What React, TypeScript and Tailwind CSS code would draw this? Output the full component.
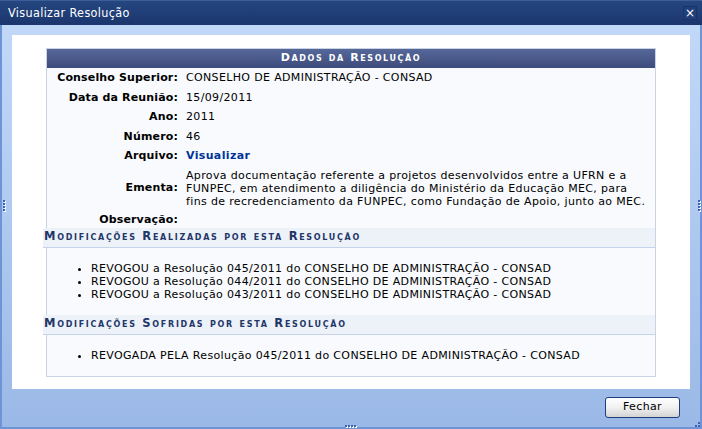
import React from "react";

const campos: { label: string; value: React.ReactNode }[] = [
  { label: "Conselho Superior:", value: "CONSELHO DE ADMINISTRAÇÃO - CONSAD" },
  { label: "Data da Reunião:", value: "15/09/2011" },
  { label: "Ano:", value: "2011" },
  { label: "Número:", value: "46" },
  {
    label: "Arquivo:",
    value: <a className="font-bold text-[#003399]">Visualizar</a>,
  },
  {
    label: "Ementa:",
    value:
      "Aprova documentação referente a projetos desenvolvidos entre a UFRN e a FUNPEC, em atendimento a diligência do Ministério da Educação MEC, para fins de recredenciamento da FUNPEC, como Fundação de Apoio, junto ao MEC.",
  },
  { label: "Observação:", value: "" },
];

const realizadas = [
  "REVOGOU a Resolução 045/2011 do CONSELHO DE ADMINISTRAÇÃO - CONSAD",
  "REVOGOU a Resolução 044/2011 do CONSELHO DE ADMINISTRAÇÃO - CONSAD",
  "REVOGOU a Resolução 043/2011 do CONSELHO DE ADMINISTRAÇÃO - CONSAD",
];

const sofridas = [
  "REVOGADA PELA Resolução 045/2011 do CONSELHO DE ADMINISTRAÇÃO - CONSAD",
];

const Grip = ({ vertical }: { vertical?: boolean }) => (
  <div className={vertical ? "flex flex-col gap-[1px]" : "flex gap-[1px]"}>
    {[0, 1, 2, 3].map((i) => (
      <span key={i} className="block w-[2px] h-[2px] bg-[#3b64b8] shadow-[1px_1px_0_#ffffff]" />
    ))}
  </div>
);

const SecaoHeader = ({ title }: { title: string }) => (
  <div className="bg-[#edf1f8] border-b border-[#c4d3ea] h-[20px] flex items-center pl-[1px] -ml-[4px] text-[11.5px] font-bold tracking-[1.7px] text-[#1f3668] [font-variant:small-caps]">
    {title}
  </div>
);

const Lista = ({ items }: { items: string[] }) => (
  <ul className="list-disc pl-[44px] py-[14px] leading-[13px] bg-[#f8fafd]">
    {items.map((t) => (
      <li key={t}>{t}</li>
    ))}
  </ul>
);

export default function App() {
  return (
    <div className="w-[702px] h-[429px] flex flex-col font-['DejaVu_Sans',Verdana,sans-serif] text-[11px] tracking-[0.35px] text-black relative overflow-hidden">
      {/* barra de titulo */}
      <div className="h-[25px] shrink-0 flex items-center justify-between pl-[8px] pr-[5px] bg-gradient-to-b from-[#25467f] to-[#1b366f] border-t border-[#3c5d98]">
        <span className="text-white text-[12.5px] font-['DejaVu_Sans_Condensed','DejaVu_Sans',sans-serif] tracking-[0.35px]">
          Visualizar Resolução
        </span>
        <span className="w-[14px] h-[14px] flex items-center justify-center bg-[#213f7a] border border-[#1a3366] text-white text-[12px] leading-none tracking-normal">
          ×
        </span>
      </div>

      <div className="flex-1 flex flex-col border-x-2 border-b-2 border-[#6f94d6] bg-gradient-to-b from-[#c1d8f8] to-[#9bb9e7]">
        <div className="mx-[10px] mt-[10px] bg-white px-[34px] pt-[13px] pb-[12px]">
          <div className="border border-[#c9d3e3] bg-[#f8fafd]">
            <div className="h-[19px] flex items-center justify-center bg-gradient-to-b from-[#56679a] to-[#3d4c7c] text-white font-bold text-[11px] tracking-[1.6px] [font-variant:small-caps]">
              Dados da Resolução
            </div>
            <table className="w-full border-collapse">
              <tbody>
                {campos.map((c, i) => (
                  <tr key={c.label}>
                    <th
                      className={
                        i === campos.length - 1
                          ? "w-[136px] text-right align-middle font-bold py-[2px] pr-[5px] leading-[13px] whitespace-nowrap tracking-[0.15px]"
                          : "w-[136px] text-right align-middle font-bold py-[3px] pr-[5px] leading-[13.5px] whitespace-nowrap tracking-[0.15px]"
                      }
                    >
                      {c.label}
                    </th>
                    <td className="py-[3px] pl-[3px] pr-[4px] leading-[13px] align-middle">
                      {c.value}
                    </td>
                  </tr>
                ))}
              </tbody>
            </table>
            <SecaoHeader title="Modificações Realizadas por esta Resolução" />
            <Lista items={realizadas} />
            <SecaoHeader title="Modificações Sofridas por esta Resolução" />
            <Lista items={sofridas} />
          </div>
        </div>
        <div className="flex justify-end pt-[8px] pr-[20px]">
          <button className="w-[75px] h-[21px] rounded-[3px] border border-[#1c3f7d] bg-gradient-to-b from-[#ffffff] via-[#f1f1f1] to-[#d3d3d3] text-[11px] font-['DejaVu_Sans',sans-serif] text-black">
            Fechar
          </button>
        </div>
      </div>

      <div className="absolute left-[3px] top-[200px]">
        <Grip vertical />
      </div>
      <div className="absolute right-[2px] top-[200px]">
        <Grip vertical />
      </div>
      <div className="absolute left-[345px] bottom-[2px]">
        <Grip />
      </div>
      <div className="absolute right-[2px] bottom-[2px] flex flex-col items-end gap-[1px]">
        <span className="block w-[2px] h-[2px] bg-[#3b64b8]" />
        <div className="flex gap-[1px]">
          <span className="block w-[2px] h-[2px] bg-[#3b64b8]" />
          <span className="block w-[2px] h-[2px] bg-[#3b64b8]" />
        </div>
      </div>
    </div>
  );
}
